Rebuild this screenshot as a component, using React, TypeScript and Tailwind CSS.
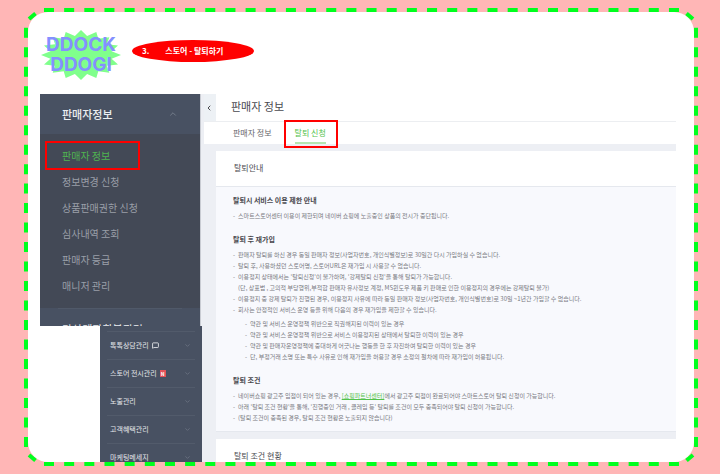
import React from 'react';
import { ChevronDown, ChevronLeft, ChevronUp, MessageSquare } from 'lucide-react';
import { clsx } from 'clsx';

const sellerMenu = ['판매자 정보', '정보변경 신청', '상품판매권한 신청', '심사내역 조회', '판매자 등급', '매니저 관리'];

const storeMenu = [
  { label: '톡톡상담관리', icon: 'talk' },
  { label: '스토어 전시관리', icon: 'new' },
  { label: '노출관리' },
  { label: '고객혜택관리' },
  { label: '마케팅메세지' },
];

const rejoinRules = [
  '판매자 탈퇴를 하신 경우 동일 판매자 정보(사업자번호, 개인식별정보)로 30일간 다시 가입하실 수 없습니다.',
  '탈퇴 후, 사용하셨던 스토어명, 스토어URL은 재가입 시 사용할 수 없습니다.',
  "이용정지 상태에서는 '탈퇴신청'이 불가하며, '강제탈퇴 신청'을 통해 탈퇴가 가능합니다.\n(단, 상표법 , 고의적 부당행위,부적합 판매자 유사정보 계정, MS윈도우 제품 키 판매로 인한 이용정지의 경우에는 강제탈퇴 불가)",
  '이용정지 중 강제 탈퇴가 진행된 경우, 이용정지 사유에 따라 동일 판매자 정보(사업자번호, 개인식별번호)로 30일 ~1년간 가입할 수 없습니다.',
  '회사는 안정적인 서비스 운영 등을 위해 다음의 경우 재가입을 제한할 수 있습니다.',
];

const rejoinLimits = [
  '약관 및 서비스 운영정책 위반으로 직권해지된 이력이 있는 경우',
  '약관 및 서비스 운영정책 위반으로 서비스 이용정지된 상태에서 탈퇴한 이력이 있는 경우',
  '약관 및 판매자운영정책에 중대하게 어긋나는 행동을 한 후 자진하여 탈퇴한 이력이 있는 경우',
  '단, 부정거래 소명 또는 특수 사유로 인해 재가입을 허용할 경우 소정의 절차에 따라 재가입이 허용됩니다.',
];

function starPoints(count: number) {
  return Array.from({ length: count * 2 }, (_, i) => {
    const angle = (Math.PI * i) / count - Math.PI / 2;
    const k = i % 2 ? 0.78 : 1;
    return `${(41 + 40 * k * Math.cos(angle)).toFixed(1)},${(25 + 25 * k * Math.sin(angle)).toFixed(1)}`;
  }).join(' ');
}

function Logo() {
  return (
    <div className="relative h-[50px] w-[82px]">
      <svg viewBox="0 0 82 50" className="absolute inset-0 h-full w-full" aria-hidden="true">
        <polygon points={starPoints(16)} fill="#80ff8c" />
      </svg>
      <div className="relative pt-[5px] text-center font-[Inter] text-[19px] leading-[20px] font-bold text-[#8490ff]">
        DDOCK
        <br />
        DDOGI
      </div>
    </div>
  );
}

// green stitching around the card
function DashedFrame() {
  return (
    <svg
      viewBox="0 0 674 458"
      preserveAspectRatio="none"
      className="pointer-events-none absolute inset-0 h-full w-full"
      fill="none"
      stroke="#00ff1e"
      strokeWidth="4"
      aria-hidden="true"
    >
      <path d="M20 2H655M20 456H655" strokeDasharray="10 10.16" />
      <path d="M2 19.7V439M672 19.7V439" strokeDasharray="10 9.49" />
      <path d="M5 11L11.5 5.5M662.5 5.5L669 11M5 447L11.5 452.5M662.5 452.5L669 447" />
    </svg>
  );
}

function Rule({ children }: { children: React.ReactNode }) {
  return (
    <li className="flex gap-[3px] whitespace-pre-line">
      <span>-</span>
      <span>{children}</span>
    </li>
  );
}

function Sidebar() {
  return (
    <aside className="w-[160px] shrink-0">
      <nav className="h-[232px] overflow-hidden bg-[#485162]">
        <button className="flex h-10 w-full items-center justify-between pr-[22px] pl-[22px] text-[11px] font-medium text-[#eceef1]">
          판매자정보
          <ChevronUp className="h-[10px] w-[10px] text-[#7b8390]" />
        </button>
        <ul className="bg-[#434956] pt-[9px] pb-[9px] text-[10px] text-[#9a9fa8]">
          {sellerMenu.map((label, i) => (
            <li key={label} className="relative h-[26px] pl-[22px] leading-[26px]">
              {i === 0 && <span className="absolute -top-0.5 left-[5px] h-[29px] w-[95px] border-2 border-[#ff0000]" />}
              <a href="#" className={clsx(i === 0 && 'text-[#4fb550]')}>{label}</a>
            </li>
          ))}
        </ul>
        <div className="mx-[18px] border-t border-[#505969]" />
        <a href="#" className="block pt-3 pl-[22px] text-[11px] leading-4 whitespace-nowrap text-[#eceef1]">
          가상계좌환불관리
        </a>
      </nav>
      <nav className="relative -mr-0.5 ml-[60px] bg-[#485162] px-[7px] pt-[5px]">
        {storeMenu.map(({ label, icon }) => (
          <button
            key={label}
            className="flex h-7 w-full items-center border-t border-[#525b6b] pr-1 pl-[3px] text-[7px] whitespace-nowrap text-[#e6e8eb]"
          >
            {label}
            {icon === 'talk' && <MessageSquare className="ml-[3px] h-[7px] w-[7px]" strokeWidth={3} />}
            {icon === 'new' && (
              <span className="ml-[3px] h-[7px] w-[6px] bg-[#e5535a] text-center text-[5px] leading-[7px] font-bold text-white">N</span>
            )}
            <ChevronDown className="ml-auto h-[7px] w-[7px] text-[#7b8390]" />
          </button>
        ))}
      </nav>
    </aside>
  );
}

function Content() {
  return (
    <section className="min-w-0 flex-1 border-l border-[#c9ccd3] bg-[#edeff4] pl-[3px] text-[#4a4a4f]">
      <header className="flex h-7 border-b border-[#eceef1] bg-white">
        <button className="flex w-3 items-center bg-[#edf1f5] pl-px" aria-label="메뉴 닫기">
          <ChevronLeft className="h-2 w-2" strokeWidth={3} />
        </button>
        <h1 className="pl-[15px] text-[11px] leading-[25px]">판매자 정보</h1>
      </header>
      <nav className="flex h-[22px] bg-white pl-[29px] text-[8px] leading-[22px]">
        <a href="#" className="text-[#66666b]">판매자 정보</a>
        <a href="#" className="relative ml-[23px] h-[22px] border-b-2 border-[#b5e6b0] text-[#53c24b]">
          탈퇴 신청
          <span className="absolute -top-0.5 -left-[11px] h-7 w-[54px] border-2 border-[#ff0000]" />
        </a>
      </nav>
      <div className="mt-[7px] ml-3">
        <h2 className="h-[35px] bg-white pl-[18px] text-[8px] leading-[34px]">탈퇴안내</h2>
        <div className="border-y border-[#e5e8ee] bg-[#f8f9fd] px-[17px] pt-[7px] pb-2 text-[6px] leading-[11px] text-[#77787d]">
          <h3 className="mb-1 text-[7px] leading-3 font-bold text-[#48484d]">탈퇴시 서비스 이용 제한 안내</h3>
          <ul>
            <Rule>스마트스토어센터 이용이 제한되며 네이버 쇼핑에 노출중인 상품의 전시가 중단됩니다.</Rule>
          </ul>
          <h3 className="mt-3 mb-1 text-[7px] leading-3 font-bold text-[#48484d]">탈퇴 후 재가입</h3>
          <ul>
            {rejoinRules.map((rule) => <Rule key={rule}>{rule}</Rule>)}
          </ul>
          <ul className="mt-[3px] pl-3">
            {rejoinLimits.map((rule) => <Rule key={rule}>{rule}</Rule>)}
          </ul>
          <h3 className="mt-3 mb-1 text-[7px] leading-3 font-bold text-[#48484d]">탈퇴 조건</h3>
          <ul>
            <Rule>
              네이버쇼핑 광고주 입점이 되어 있는 경우, <a href="#" className="text-[#53c24b] underline">[쇼핑파트너센터]</a>에서 광고주 퇴점이 완료되어야 스마트스토어 탈퇴 신청이 가능합니다.
            </Rule>
            <Rule>아래 '탈퇴 조건 현황'을 통해, '진행중인 거래 , 클레임 등' 탈퇴를 조건이 모두 충족되어야 탈퇴 신청이 가능합니다.</Rule>
            <Rule>(탈퇴 조건이 충족된 경우, 탈퇴 조건 현황은 노출되지 않습니다)</Rule>
          </ul>
        </div>
        <h2 className="mt-[7px] h-[34px] bg-white pl-[18px] text-[8px] leading-[34px]">탈퇴 조건 현황</h2>
      </div>
    </section>
  );
}

export default function App() {
  return (
    <div className="h-screen bg-[#ffb6b6] py-2 pr-[22px] pl-6 font-['Noto_Sans_CJK_KR',sans-serif]">
      <div className="relative h-full p-1">
        <main className="flex h-full flex-col overflow-hidden rounded-[20px] bg-white pr-[18px] pl-3">
          <div className="flex h-[82px] shrink-0 gap-[10px] pt-[18px]">
            <Logo />
            <h1 className="mt-[10px] flex h-[22px] w-[122px] items-center gap-4 rounded-[50%] bg-[#ff0000] pl-[10px] text-[8px] font-bold text-white">
              <span>3.</span>
              <span>스토어 - 탈퇴하기</span>
            </h1>
          </div>
          <div className="flex min-h-0 flex-1">
            <Sidebar />
            <Content />
          </div>
        </main>
        <DashedFrame />
      </div>
    </div>
  );
}
